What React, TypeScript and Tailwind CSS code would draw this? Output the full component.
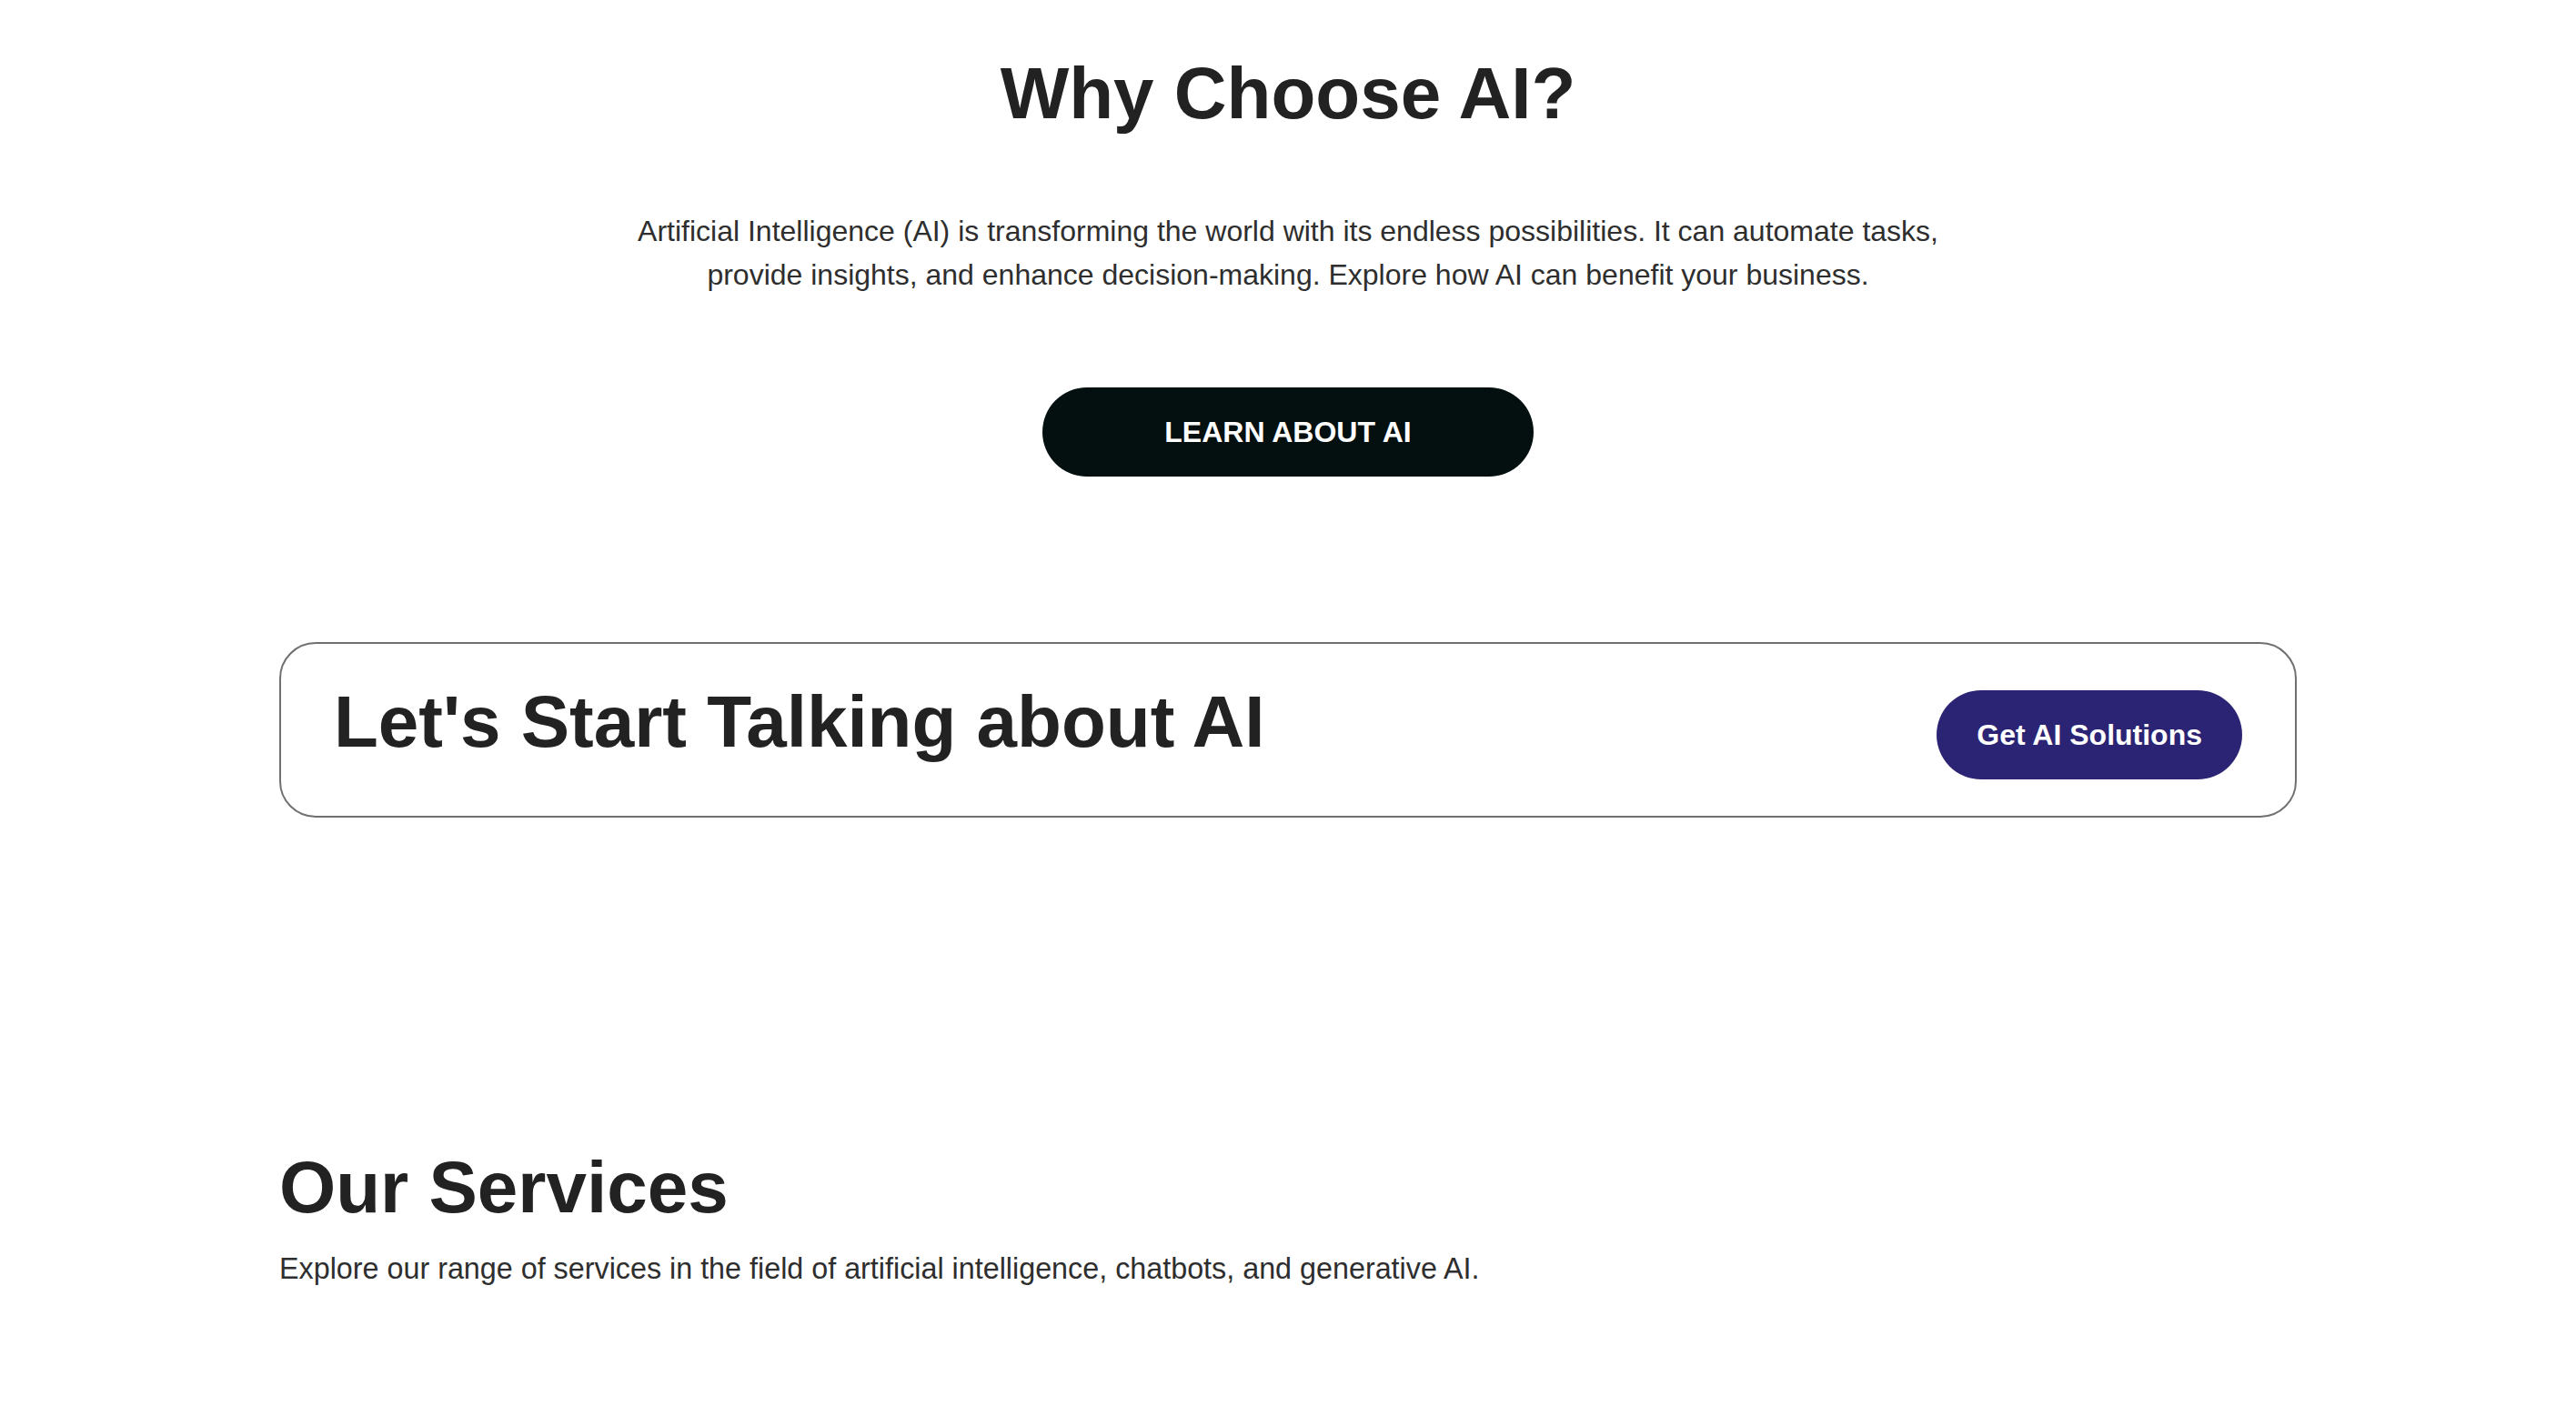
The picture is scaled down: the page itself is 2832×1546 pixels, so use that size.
import React from 'react';

const sans = { fontFamily: '"Liberation Sans", Arial, sans-serif' };

function WhyChoose() {
  return (
    <section className="flex flex-col items-center pt-[55px] text-center">
      <h1 className="text-[80px] leading-[96px] font-bold text-[#222222]">Why Choose AI?</h1>
      <p className="mt-[79px] max-w-[1470px] text-[32px] leading-[48px] text-[#2e2e2e]">
        Artificial Intelligence (AI) is transforming the world with its endless possibilities. It can automate tasks,
        provide insights, and enhance decision-making. Explore how AI can benefit your business.
      </p>
      <button className="mt-[100px] flex h-[98px] w-[540px] items-center justify-center rounded-full bg-[#040f10] text-[32px] font-bold text-white">
        LEARN ABOUT AI
      </button>
    </section>
  );
}

function TalkBanner() {
  return (
    <div className="mt-[182px] flex items-start justify-between rounded-[40px] border-2 border-[#707070] px-[58px] py-10">
      <h2 className="mb-4 text-[80px] leading-[92px] font-bold text-[#222222]">Let's Start Talking about AI</h2>
      <button className="mt-[11px] flex h-[98px] items-center rounded-full bg-[#2b2474] px-[44px] text-[32px] font-bold text-white">
        Get AI Solutions
      </button>
    </div>
  );
}

function Services() {
  return (
    <section className="mt-[359px]">
      <h2 className="text-[80px] leading-[96px] font-bold text-[#222222]">Our Services</h2>
      <p className="mt-[17px] text-[32.3px] leading-[48px] text-[#2e2e2e]">
        Explore our range of services in the field of artificial intelligence, chatbots, and generative AI.
      </p>
    </section>
  );
}

export default function App() {
  return (
    <div className="min-h-screen bg-white" style={sans}>
      <WhyChoose />
      <div className="mx-auto w-[2218px]">
        <TalkBanner />
        <Services />
      </div>
    </div>
  );
}
